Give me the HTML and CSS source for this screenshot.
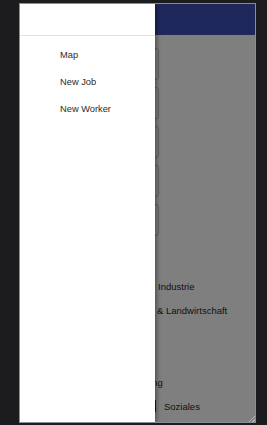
FILE: index.html
```html
<!DOCTYPE html>
<html lang="en">
<head>
    <meta charset="UTF-8">
    <title>Jobs</title>
    <link rel="stylesheet" href="styles.css">
</head>
<body>
    <div class="frame">
        <div class="page">
            <div class="appbar"></div>

            <div class="form">
                <div class="field"></div>
                <div class="field"></div>
                <div class="field"></div>
                <div class="field"></div>
                <div class="field"></div>
            </div>

            <div class="sectors">
                <div class="sector sector-a">Industrie</div>
                <div class="sector sector-b">&amp; Landwirtschaft</div>
                <div class="sector"></div>
                <div class="sector"></div>
                <div class="sector sector-c">Bildung</div>
                <div class="sector sector-d"><span class="box"></span>Soziales</div>
            </div>
        </div>

        <!-- dimmed page behind the open drawer -->
        <div class="scrim"></div>

        <nav class="drawer">
            <div class="drawer-header"></div>
            <ul class="drawer-menu">
                <li><a href="#">Map</a></li>
                <li><a href="#">New Job</a></li>
                <li><a href="#">New Worker</a></li>
            </ul>
        </nav>

        <div class="grip"></div>
    </div>
</body>
</html>
```

FILE: styles.css
```css
body {
    margin: 0;
    height: 425px;
    background-color: #1c1c1e;
    font-family: 'Liberation Sans', Arial, sans-serif;
    overflow: hidden;
}

.frame {
    position: relative;
    box-sizing: border-box;
    width: 237px;
    height: 420px;
    margin: 3px 0 0 19px;
    border: 1px solid #8d8d8d;
    background-color: white;
    overflow: hidden;
}

.page {
    display: flex;
    flex-direction: column;
    height: 100%;
}

.appbar {
    height: 31px;
    flex-shrink: 0;
    background-color: #3f51b5;
}

.form {
    display: flex;
    flex-direction: column;
    gap: 7px;
    padding: 13px 0 0 10px;
}

.field {
    width: 127px;
    height: 30px;
    border: 1px solid #c4c4c4;
    border-radius: 3px;
}

.sectors {
    display: flex;
    flex-direction: column;
    padding-top: 38px;
}

.sector {
    display: flex;
    align-items: center;
    height: 24px;
    font-size: 9.5px;
    color: #1e1e1e;
    white-space: nowrap;
}

.box {
    width: 4px;
    height: 10px;
    margin-right: 8px;
    border: 1px solid #333;
    border-left: none;
}

.sector-a { padding-left: 138px; }
.sector-b { padding-left: 137px; }
.sector-c { padding-left: 111px; }
.sector-d { padding-left: 131px; }

.scrim {
    position: absolute;
    top: 0;
    left: 0;
    right: 0;
    bottom: 0;
    background-color: rgba(0, 0, 0, 0.5);
}

.drawer {
    position: absolute;
    top: 0;
    left: 0;
    bottom: 0;
    width: 135px;
    background-color: white;
    box-shadow: 2px 0 4px rgba(0, 0, 0, 0.35);
}

.drawer-header {
    height: 31px;
    border-bottom: 1px solid #e2e2e2;
}

.drawer-menu {
    list-style: none;
    margin: 0;
    padding: 6px 0 0 0;
}

.drawer-menu li {
    height: 27px;
}

.drawer-menu a {
    display: block;
    padding-left: 40px;
    line-height: 27px;
    font-size: 9.3px;
    color: #2b2b2b;
    text-decoration: none;
}

.grip {
    position: absolute;
    right: 0;
    bottom: 0;
    width: 8px;
    height: 8px;
    background: repeating-linear-gradient(135deg, transparent 0 1.5px, #b5b5b5 1.5px 2.5px);
    clip-path: polygon(100% 0, 100% 100%, 0 100%);
}
```
